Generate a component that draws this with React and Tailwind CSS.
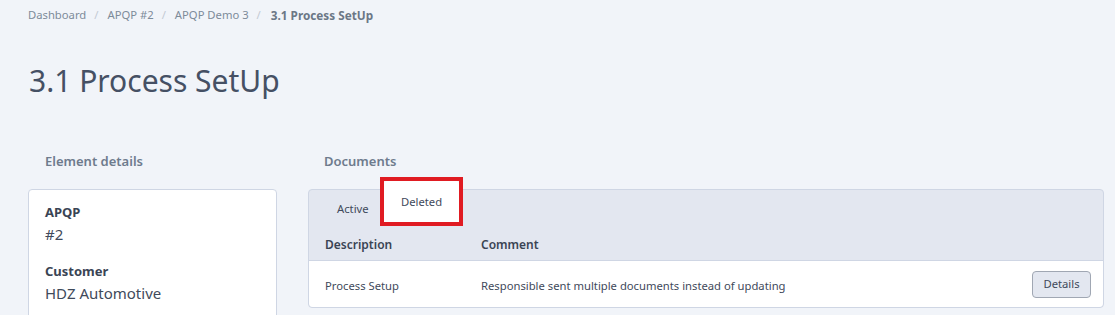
export default function App() {
    return (
        <div
            className="min-h-screen bg-[#f1f4f9] text-[#3f4a5b] overflow-hidden"
            style={{ fontFamily: '"Noto Sans", "Open Sans", sans-serif' }}
        >
            {/* Breadcrumb */}
            <nav className="flex h-[16px] items-center gap-[8px] pl-[28px] mt-[7px] text-[11.25px] leading-[16px] text-[#7d8b99]">
                <span>Dashboard</span>
                <span className="text-[#c3cad4]">/</span>
                <span className="ml-[1px]">APQP #2</span>
                <span className="text-[#c3cad4]">/</span>
                <span className="ml-[1px]">APQP Demo 3</span>
                <span className="text-[#c3cad4]">/</span>
                <span className="ml-[2px] text-[11.75px] font-bold text-[#6b7786]">3.1 Process SetUp</span>
            </nav>

            <h1 className="pl-[29px] pt-[38px] text-[30px] leading-[40px] text-[#455064]">
                3.1 Process SetUp
            </h1>

            <div className="flex gap-[31px] pl-[28px] pr-[11px] pt-[50px]">
                {/* Element details */}
                <div className="w-[249px] shrink-0">
                    <h2 className="pl-[17px] text-[13px] font-semibold text-[#6e7b8d] leading-[20px]">
                        Element details
                    </h2>
                    <div className="mt-[18px] h-[200px] rounded-[4px] border border-[#cfd6e4] bg-white px-[16px] pt-[12px]">
                        <div className="text-[13px] font-bold text-[#3a4454] leading-[20px]">APQP</div>
                        <div className="mt-[1px] text-[15px] leading-[22px]">#2</div>
                        <div className="mt-[16px] text-[13px] font-bold text-[#3a4454] leading-[20px]">Customer</div>
                        <div className="mt-[1px] text-[15px] leading-[22px]">HDZ Automotive</div>
                    </div>
                </div>

                {/* Documents */}
                <div className="flex-1">
                    <h2 className="pl-[16px] text-[13px] font-semibold text-[#6e7b8d] leading-[20px]">
                        Documents
                    </h2>
                    <div className="mt-[18px] rounded-[4px] border border-[#cfd6e4] bg-[#e3e7f0]">
                        {/* Tabs */}
                        <div className="flex h-[36px] items-start pl-[16px] text-[11.25px] leading-[16px]">
                            <button className="w-[59px] pl-[12px] pt-[11px] text-left text-[#3f4a5b]">
                                Active
                            </button>
                            <div className="relative -mt-[9px]">
                                <button className="flex h-[41px] w-[75px] items-start justify-center rounded-t-[3px] bg-white pt-[13px] text-[#3f4a5b]">
                                    Deleted
                                </button>
                                <div className="pointer-events-none absolute -left-[4px] -top-[4px] h-[49px] w-[83px] border-[4px] border-[#e01b22]" />
                            </div>
                        </div>
                        {/* Header */}
                        <div className="flex h-[35px] items-center border-b border-[#cfd6e4] pt-[4px] text-[12px] font-semibold text-[#3a4454]">
                            <div className="w-[172px] pl-[16px]">Description</div>
                            <div>Comment</div>
                        </div>
                        {/* Row */}
                        <div className="flex h-[46px] items-center rounded-b-[4px] bg-white text-[11.25px] text-[#3f4a5b]">
                            <div className="mt-[4px] w-[172px] pl-[16px]">Process Setup</div>
                            <div className="mt-[4px] flex-1">Responsible sent multiple documents instead of updating</div>
                            <button className="mr-[12px] h-[27px] w-[59px] rounded-[4px] border border-[#a0a7b3] bg-[#e3e7f0] text-[11.25px] text-[#3f4a5b]">
                                Details
                            </button>
                        </div>
                    </div>
                </div>
            </div>
        </div>
    );
}
